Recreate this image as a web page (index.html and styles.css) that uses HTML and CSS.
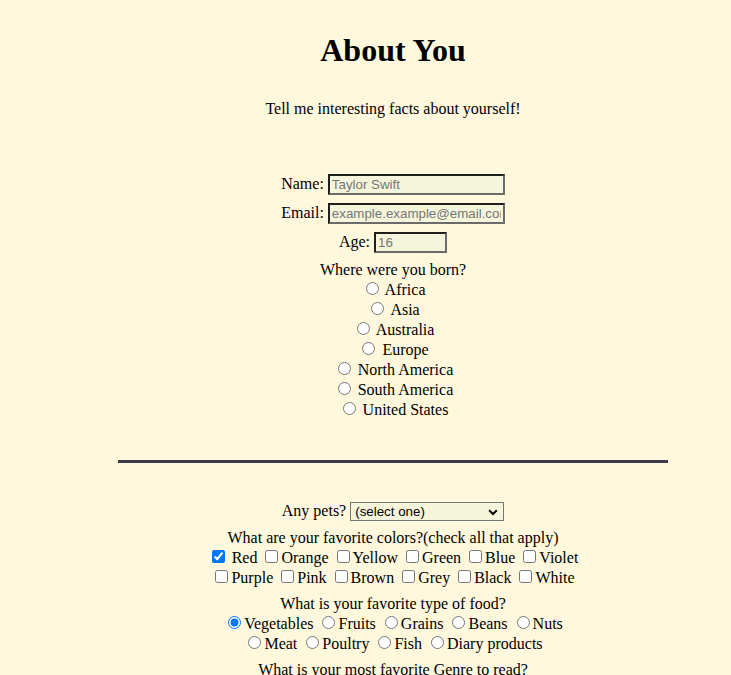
FILE: index.html
```html
<!DOCTYPE html>
<html lang="en">
<head>
<meta charset="utf-8">
<title>About You</title>
<link rel="stylesheet" href="styles.css">
</head>
<body>
<div class="page">
  <h1 class="title">About You</h1>
  <p class="intro">Tell me interesting facts about yourself!</p>

  <form class="form">
    <div class="field"><label for="name">Name: </label><input class="text-input" id="name" type="text" placeholder="Taylor Swift"></div>
    <div class="field"><label for="email">Email: </label><input class="text-input" id="email" type="email" placeholder="example.example@email.com"></div>
    <div class="field"><label for="age">Age: </label><input class="text-input age-input" id="age" type="text" placeholder="16"></div>

    <div class="group">
      <div class="question">Where were you born?</div>
      <div class="line"><input type="radio" name="born" id="b1"><label for="b1"> Africa</label></div>
      <div class="line"><input type="radio" name="born" id="b2"><label for="b2"> Asia</label></div>
      <div class="line"><input type="radio" name="born" id="b3"><label for="b3"> Australia</label></div>
      <div class="line"><input type="radio" name="born" id="b4"><label for="b4"> Europe</label></div>
      <div class="line"><input type="radio" name="born" id="b5"><label for="b5"> North America</label></div>
      <div class="line"><input type="radio" name="born" id="b6"><label for="b6"> South America</label></div>
      <div class="line"><input type="radio" name="born" id="b7"><label for="b7"> United States</label></div>
    </div>

    <hr class="divider">

    <div class="field pets"><label for="pets">Any pets? </label><span class="select-wrap"><select class="select" id="pets">
      <option>(select one)</option>
      <option>Dog</option>
      <option>Cat</option>
      <option>Fish</option>
      <option>Other</option>
    </select><svg class="chevron" width="10" height="7" viewBox="0 0 10 7" aria-hidden="true"><path d="M1.2 1.3 L5 5 L8.8 1.3" fill="none" stroke="#000" stroke-width="2"/></svg></span></div>

    <div class="group spaced">
      <div class="question">What are your favorite colors?(check all that apply)</div>
      <div class="line"><input type="checkbox" checked> Red <input type="checkbox">Orange <input type="checkbox">Yellow <input type="checkbox">Green <input type="checkbox">Blue <input type="checkbox">Violet</div>
      <div class="line"><input type="checkbox">Purple <input type="checkbox">Pink <input type="checkbox">Brown <input type="checkbox">Grey <input type="checkbox">Black <input type="checkbox">White</div>
    </div>

    <div class="group spaced">
      <div class="question">What is your favorite type of food?</div>
      <div class="line"><input type="radio" name="food" checked>Vegetables <input type="radio" name="food">Fruits <input type="radio" name="food">Grains <input type="radio" name="food">Beans <input type="radio" name="food">Nuts</div>
      <div class="line"><input type="radio" name="food">Meat <input type="radio" name="food">Poultry <input type="radio" name="food">Fish <input type="radio" name="food">Diary products</div>
    </div>

    <div class="group">
      <div class="question">What is your most favorite Genre to read?</div>
    </div>
  </form>
</div>
</body>
</html>
```

FILE: styles.css
```css
html {
  overflow: hidden;
}

body {
  margin: 0;
  background: #fff8dc;
  color: #000;
  font-family: "Liberation Serif", "Times New Roman", serif;
  font-size: 16px;
}

.page {
  margin: 0 8px 0 63px;
  text-align: center;
}

.title {
  margin: 32px 0 0;
  font-size: 32px;
  font-weight: bold;
}

.intro {
  margin: 31px 0 0;
}

.form {
  margin-top: 56px;
}

.field {
  margin-bottom: 8px;
}

.text-input {
  box-sizing: content-box;
  width: 169px;
  padding: 1px 2px;
  border-style: solid;
  border-width: 2px;
  border-color: #1f1f1f #6b6b6b #6b6b6b #1f1f1f;
  background: #f5f5dc;
  font: 13.333px "Liberation Sans", Arial, sans-serif;
  line-height: normal;
  color: #000;
}

.text-input::placeholder {
  color: #757575;
}

.age-input {
  width: 65px;
}

.divider {
  margin: 41px auto 39px;
  width: 550px;
  height: 3px;
  border: none;
  background: #3d3a4b;
}

.select-wrap {
  position: relative;
  display: inline-block;
}

.select {
  -webkit-appearance: none;
  appearance: none;
  box-sizing: border-box;
  width: 154px;
  height: 19px;
  margin: 0;
  padding: 0 0 0 4px;
  border: 1px solid #767676;
  border-radius: 0;
  background-color: #f5f5dc;
  font: 13.333px "Liberation Sans", Arial, sans-serif;
  color: #000;
}

.chevron {
  position: absolute;
  right: 6px;
  top: 50%;
  margin-top: -3px;
  pointer-events: none;
}

.spaced {
  margin-bottom: 8px;
}
```
